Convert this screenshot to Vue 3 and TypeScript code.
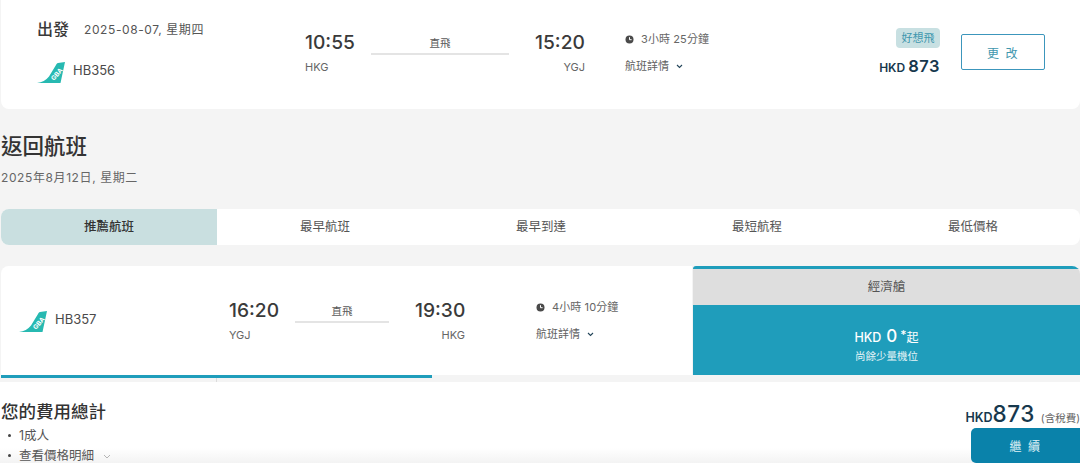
<script setup lang="ts">
interface Flight {
  dep: string
  from: string
  arr: string
  to: string
  duration: string
}
const outbound: Flight = { dep: '10:55', from: 'HKG', arr: '15:20', to: 'YGJ', duration: '3小時 25分鐘' }
const inbound: Flight = { dep: '16:20', from: 'YGJ', arr: '19:30', to: 'HKG', duration: '4小時 10分鐘' }
const tabs = ['推薦航班', '最早航班', '最早到達', '最短航程', '最低價格']
</script>

<template>
  <div class="page">
    <section class="top-card">
      <div class="top-left">
        <div class="dep-head">
          <span class="dep-title">出發</span>
          <span class="dep-date">2025-08-07, 星期四</span>
        </div>
        <div class="carrier">
          <svg class="tail" viewBox="0 0 28 21" width="28" height="21">
            <path d="M28 0 L23.5 21 L0 21 C5 20 9 18.5 12 14.5 L19 3 C19.5 2 20 1 21 1 Z" fill="#27b9b1" />
            <text x="0" y="0" transform="translate(17 19) rotate(-50)" font-size="6.5" font-weight="700" fill="#fff" font-family="Inter, sans-serif">GBA</text>
          </svg>
          <span class="flight-no">HB356</span>
        </div>
      </div>
      <div class="route route-top">
        <div class="stop">
          <div class="time">{{ outbound.dep }}</div>
          <div class="code">{{ outbound.from }}</div>
        </div>
        <div class="link link-top">
          <span class="direct">直飛</span>
        </div>
        <div class="stop stop-end">
          <div class="time">{{ outbound.arr }}</div>
          <div class="code">{{ outbound.to }}</div>
        </div>
        <div class="info">
          <div class="duration">
            <svg width="9" height="9" viewBox="0 0 9 9"><circle cx="4.5" cy="4.5" r="4" fill="#4a4a4a" /><path d="M4.5 2.2 V4.7 H6.6" stroke="#fff" stroke-width="1" fill="none" /></svg>
            <span>{{ outbound.duration }}</span>
          </div>
          <div class="details">
            <span>航班詳情</span>
            <svg width="7" height="5" viewBox="0 0 7 5"><path d="M1 1 L3.5 3.5 L6 1" stroke="#24465a" stroke-width="1.1" fill="none" /></svg>
          </div>
        </div>
      </div>
      <div class="fare">
        <span class="fare-tag">好想飛</span>
        <div class="fare-price"><span class="cur">HKD</span><span class="amt">873</span></div>
      </div>
      <button class="change" type="button">更 改</button>
    </section>

    <section class="return-head">
      <h1>返回航班</h1>
      <p>2025年8月12日, 星期二</p>
    </section>

    <nav class="tabs">
      <div v-for="(tab, i) in tabs" :key="tab" class="tab" :class="{ active: i === 0 }">{{ tab }}</div>
    </nav>

    <section class="result">
      <div class="result-main">
        <div class="result-row">
          <div class="carrier carrier-return">
            <svg class="tail" viewBox="0 0 28 21" width="28" height="21">
              <path d="M28 0 L23.5 21 L0 21 C5 20 9 18.5 12 14.5 L19 3 C19.5 2 20 1 21 1 Z" fill="#27b9b1" />
              <text x="0" y="0" transform="translate(17 19) rotate(-50)" font-size="6.5" font-weight="700" fill="#fff" font-family="Inter, sans-serif">GBA</text>
            </svg>
            <span class="flight-no">HB357</span>
          </div>
          <div class="route">
            <div class="stop">
              <div class="time">{{ inbound.dep }}</div>
              <div class="code">{{ inbound.from }}</div>
            </div>
            <div class="link link-return">
              <span class="direct">直飛</span>
            </div>
            <div class="stop stop-end">
              <div class="time">{{ inbound.arr }}</div>
              <div class="code">{{ inbound.to }}</div>
            </div>
            <div class="info info-return">
              <div class="duration">
                <svg width="9" height="9" viewBox="0 0 9 9"><circle cx="4.5" cy="4.5" r="4" fill="#4a4a4a" /><path d="M4.5 2.2 V4.7 H6.6" stroke="#fff" stroke-width="1" fill="none" /></svg>
                <span>{{ inbound.duration }}</span>
              </div>
              <div class="details">
                <span>航班詳情</span>
                <svg width="7" height="5" viewBox="0 0 7 5"><path d="M1 1 L3.5 3.5 L6 1" stroke="#24465a" stroke-width="1.1" fill="none" /></svg>
              </div>
            </div>
          </div>
        </div>
        <div class="progress"><div class="progress-fill"></div></div>
        <div class="tick"></div>
      </div>
      <div class="cabin">
        <div class="cabin-head">經濟艙</div>
        <div class="cabin-body">
          <div class="cabin-price"><span class="c-cur">HKD</span><span class="c-amt">0</span><span class="c-star">*</span><span class="c-from">起</span></div>
          <div class="cabin-note">尚餘少量機位</div>
        </div>
      </div>
    </section>

    <footer class="summary">
      <div class="summary-left">
        <h2>您的費用總計</h2>
        <ul>
          <li>1成人</li>
          <li>
            查看價格明細
            <svg width="8" height="5" viewBox="0 0 8 5"><path d="M1 1 L4 4 L7 1" stroke="#b5b5b5" stroke-width="1" fill="none" /></svg>
          </li>
        </ul>
      </div>
      <div class="summary-right">
        <div class="total"><span class="t-cur">HKD</span><span class="t-amt">873</span><span class="t-tax">(含稅費)</span></div>
        <button class="continue" type="button">繼 續</button>
      </div>
    </footer>
  </div>
</template>

<style>
html, body { margin: 0; overflow: hidden; }
</style>

<style scoped>
.page {
  width: 1080px;
  height: 463px;
  overflow: hidden;
  background: #f4f4f4;
  color: #3c3c3c;
  font-family: Inter, "Noto Sans CJK TC", sans-serif;
  font-size: 12px;
  display: flex;
  flex-direction: column;
}
.top-card {
  height: 109px;
  margin-left: 1px;
  flex: none;
  background: #fff;
  border-radius: 0 0 8px 8px;
  display: flex;
  box-sizing: border-box;
}
.top-left { width: 304px; flex: none; padding: 17px 0 0 36px; box-sizing: border-box; }
.dep-head { display: flex; align-items: center; height: 22px; }
.dep-title { font-size: 16px; font-weight: 500; color: #3a3a3a; }
.dep-date { margin-left: 15px; font-size: 12px; letter-spacing: 0.6px; color: #555; }
.carrier { display: flex; align-items: center; margin-top: 18px; }
.tail { flex: none; margin-top: 5px; }
.flight-no { margin-left: 8px; font-size: 13px; color: #4a4a4a; }
.route { display: flex; }
.route-top { padding-top: 31px; width: 532px; flex: none; }
.stop { width: 50px; flex: none; }
.time { font-size: 19.2px; line-height: 22px; font-weight: 500; color: #3a3a3a; white-space: nowrap; }
.code { margin-top: 7px; font-size: 11px; line-height: 14px; color: #666; }
.stop-end .code { text-align: right; }
.link { display: flex; justify-content: center; box-sizing: border-box; flex: none; height: 24px; border-bottom: 2px solid #e4e4e4; }
.link-top { width: 138px; margin: 0 26px 0 16px; }
.link-return { width: 94px; margin: 0 26px 0 16px; }
.direct { font-size: 10.5px; line-height: 25px; color: #5a5a5a; }
.info { margin-left: 40px; padding-top: 0; }
.info-return { margin-left: 71px; }
.duration { display: flex; align-items: center; gap: 7px; font-size: 11px; line-height: 16px; color: #666; letter-spacing: 0.1px; }
.details { display: flex; align-items: center; gap: 7px; margin-top: 11px; font-size: 11px; line-height: 16px; color: #5f5f5f; }
.fare { width: 0; flex: 1; display: flex; flex-direction: column; align-items: flex-end; padding-top: 28px; box-sizing: border-box; }
.fare-tag { width: 44px; height: 20px; border-radius: 4px; background: #c8e0e2; color: #3f97ae; font-size: 11px; line-height: 20px; text-align: center; }
.fare-price { display: flex; align-items: baseline; gap: 3px; margin-top: 8px; color: #17384d; font-weight: 600; }
.cur { font-size: 12px; }
.amt { font-size: 16.5px; letter-spacing: 0.5px; }
.change {
  width: 84px;
  height: 36px;
  margin: 34px 35px 0 21px;
  flex: none;
  padding: 0;
  background: #fff;
  border: 1px solid #3c96bc;
  border-radius: 2px;
  color: #3f97ae;
  font: inherit;
  font-size: 12px;
  letter-spacing: 1.5px;
}
.return-head { height: 100px; flex: none; padding: 24px 0 0 1px; box-sizing: border-box; }
.return-head h1 { margin: 0; font-size: 21.5px; line-height: 27px; font-weight: 500; color: #333; }
.return-head p { margin: 10px 0 0; font-size: 12px; line-height: 16px; letter-spacing: 0.6px; color: #666; }
.tabs { display: flex; height: 36px; flex: none; margin-left: 1px; background: #fff; border-radius: 8px; overflow: hidden; }
.tab { width: 216px; flex: none; text-align: center; line-height: 36px; font-size: 12.5px; color: #555; }
.tab.active { background: #c9dfe0; color: #333; font-weight: 500; }
.result { height: 116px; flex: none; margin: 21px 0 0 1px; display: flex; background: #fff; border-radius: 8px 8px 0 0; overflow: hidden; position: relative; }
.result-main { width: 691px; flex: none; display: flex; flex-direction: column; background: #f4f4f4; }
.result-row { height: 109px; flex: none; background: #fff; display: flex; padding-top: 33px; box-sizing: border-box; }
.progress { width: 100%; height: 3px; flex: none; }
.progress-fill { width: 431px; height: 100%; background: #1f9dbb; }
.tick { width: 1px; height: 4px; margin-left: 215px; background: #dcdcdc; }
.carrier-return { width: 228px; flex: none; padding: 0 0 0 18px; box-sizing: border-box; align-self: flex-start; margin-top: 7px; }
.cabin { width: 388px; flex: none; background: #f4f4f4; display: flex; flex-direction: column; padding-left: 1px; box-sizing: border-box; }
.cabin-head { height: 39px; flex: none; box-sizing: border-box; border-top: 3px solid #1f9dbb; border-radius: 3px 3px 0 0; background: #dedede; text-align: center; line-height: 36px; font-size: 12.5px; color: #555; }
.cabin-body { height: 70px; flex: none; background: #1f9dbb; color: #fff; display: flex; flex-direction: column; align-items: center; padding-top: 21px; box-sizing: border-box; }
.cabin-price { display: flex; align-items: baseline; height: 24px; margin-left: 0; font-weight: 500; }
.c-cur { font-size: 12.5px; }
.c-amt { font-size: 17px; margin-left: 5px; }
.c-star { font-size: 12px; margin-left: 3px; align-self: flex-start; line-height: 18px; }
.c-from { font-size: 12px; margin-left: 0; font-weight: 400; }
.cabin-note { margin-top: 0; font-size: 10.5px; line-height: 14px; color: #e6f4f7; }
.summary {
  flex: 1;
  background: linear-gradient(#fff 0, #fff 66px, #f3f3f3 100%);
  display: flex;
  justify-content: space-between;
  overflow: hidden;
}
.summary-left { padding: 18px 0 0 1px; }
.summary-left h2 { margin: 0; font-size: 17.5px; line-height: 24px; font-weight: 500; color: #333; }
.summary-left ul { margin: 2px 0 0; padding: 0 0 0 18px; list-style: none; }
.summary-left li { position: relative; font-size: 12.5px; line-height: 20px; color: #555; }
.summary-left li::before { content: ""; position: absolute; left: -11px; top: 8px; width: 3px; height: 3px; border-radius: 50%; background: #444; }
.summary-left li svg { margin-left: 5px; vertical-align: middle; }
.summary-right { width: 120px; display: flex; flex-direction: column; align-items: flex-end; padding-top: 18px; box-sizing: border-box; }
.total { display: flex; align-items: baseline; white-space: nowrap; height: 28px; margin-left: -20px; color: #17384d; }
.t-cur { font-size: 12.5px; font-weight: 600; }
.t-amt { font-size: 22.5px; line-height: 28px; font-weight: 500; letter-spacing: 0.5px; }
.t-tax { font-size: 10.5px; margin-left: 6px; color: #666; }
.continue {
  width: 109px;
  height: 35px;
  flex: none;
  padding: 0;
  border: 0;
  border-radius: 5px 0 0 5px;
  background: #0a82aa;
  color: #dff0f5;
  font: inherit;
  font-size: 12px;
  letter-spacing: 1.5px;
}
</style>
